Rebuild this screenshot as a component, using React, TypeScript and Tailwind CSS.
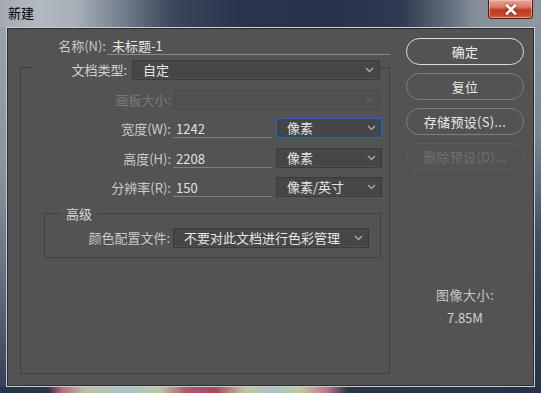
import React from "react";

const FONT = { fontFamily: '"Noto Sans CJK SC", "Noto Sans", sans-serif' };

function Chevron({ dim }: { dim?: boolean }) {
  return (
    <svg width="9" height="6" viewBox="0 0 9 6" className="shrink-0">
      <polyline
        points="1,1 4.5,4.5 8,1"
        fill="none"
        stroke={dim ? "#666666" : "#b8b8b8"}
        strokeWidth="1.1"
      />
    </svg>
  );
}

function Select({
  text,
  className,
  disabled,
  focused,
}: {
  text?: string;
  className: string;
  disabled?: boolean;
  focused?: boolean;
}) {
  const tone = focused
    ? "border-[#2f63ad] bg-[#454545] shadow-[inset_0_0_0_1px_#27466f]"
    : disabled
    ? "border-[#4a4a4a] bg-[#505050]"
    : "border-[#3a3a3a] bg-[#464646] shadow-[inset_0_-1px_0_#4e4e4e]";
  return (
    <div
      className={
        "h-[20px] flex items-center justify-between pl-[10px] pr-[5px] border shrink-0 " +
        tone +
        " " +
        className
      }
    >
      <span className="text-[13px] leading-[16px] text-[#e6e6e6] whitespace-nowrap">
        {text}
      </span>
      <Chevron dim={disabled} />
    </div>
  );
}

function ValueRow({
  label,
  value,
  unit,
  focused,
  className,
}: {
  label: string;
  value: string;
  unit: string;
  focused?: boolean;
  className: string;
}) {
  return (
    <div className={"flex items-end h-[20px] " + className}>
      <div className="w-[152px] shrink-0 text-right pr-[2px] mb-[1px] text-[13px] leading-[16px] text-[#cbcbcb] whitespace-nowrap">
        {label}
      </div>
      <div className="w-[99px] h-[20px] shrink-0 flex items-end border-b border-[#7e7e7e] pl-[3px]">
        <span className="text-[13px] leading-[16px] text-[#e2e2e2]">{value}</span>
      </div>
      <div className="ml-[4px]">
        <Select text={unit} focused={focused} className="w-[106px]" />
      </div>
    </div>
  );
}

function Btn({
  children,
  variant,
  className,
}: {
  children: React.ReactNode;
  variant: "default" | "normal" | "disabled";
  className?: string;
}) {
  const tone =
    variant === "default"
      ? "border-[1.5px] border-[#dedede] text-[#f0f0f0]"
      : variant === "disabled"
      ? "border border-[#5f5f5f] text-[#707070]"
      : "border border-[#7e7e7e] text-[#e8e8e8]";
  return (
    <div
      className={
        "w-[118px] h-[27px] rounded-full flex items-center justify-center text-[13px] leading-[16px] tracking-[0.3px] " +
        tone +
        " " +
        (className || "")
      }
    >
      {children}
    </div>
  );
}

export default function App() {
  return (
    <div
      className="w-[541px] h-[393px] overflow-hidden flex flex-col bg-[#26324a]"
      style={FONT}
    >
      {/* Title bar */}
      <div className="h-[27px] shrink-0 flex items-start justify-between bg-[linear-gradient(90deg,#a2aab2_0%,#b2b8bf_7%,#a8b0b8_14%,#76828f_22%,#3a475b_32%,#27344a_45%,#26334a_62%,#2d3a4f_74%,#5c6878_82%,#87909a_88%,#8e969f_100%)]">
        <div className="pl-[8px] pt-[4px] text-[13px] leading-[18px] text-black">
          新建
        </div>
        <div className="mr-[8px] w-[45px] h-[19px] rounded-b-[4px] border border-t-0 border-[#4a2219] bg-[linear-gradient(180deg,#eaa797_0%,#d87a64_40%,#c4391f_55%,#c9452b_85%,#d96a52_100%)] shadow-[inset_0_0_0_1px_rgba(255,220,210,0.45)] flex items-center justify-center">
          <svg width="14" height="11" viewBox="0 0 14 11" className="drop-shadow-[0_0_1px_#5a1a10]">
            <path d="M3 1.5 L11 9.5 M11 1.5 L3 9.5" stroke="#ffffff" strokeWidth="2.6" strokeLinecap="square" />
          </svg>
        </div>
      </div>

      {/* Middle */}
      <div className="flex h-[360px] shrink-0">
        <div className="w-[6px] shrink-0 bg-[linear-gradient(180deg,#9aa2ab_0%,#8a939d_40%,#5d6878_75%,#34405a_100%)]" />
        <div className="w-[529px] shrink-0 border border-[#c6ced8]">
          <div className="h-full border border-[#2c2c2c] bg-[#535353] flex">
            {/* Left column */}
            <div className="w-[382px] shrink-0 flex flex-col">
              {/* Name row */}
              <div className="mt-[9px] flex h-[17px]">
                <div className="w-[99px] shrink-0 text-right pr-[1px] text-[13px] leading-[16px] text-[#c8c8c8] whitespace-nowrap">
                  名称(N):
                </div>
                <div className="w-[285px] h-[17px] border-b border-[#8a8a8a] pl-[5px] text-[13px] leading-[16px] text-[#e6e6e6]">
                  未标题-1
                </div>
              </div>

              {/* Group box */}
              <div className="mt-[12px] ml-[12px] w-[370px] h-[307px] border border-[#404040] flex flex-col">
                <div className="mt-[-8px] h-[20px] flex">
                  <div className="w-[11px] shrink-0" />
                  <div className="w-[100px] shrink-0 bg-[#535353] text-right pr-[5px] text-[13px] leading-[20px] text-[#d2d2d2] whitespace-nowrap">
                    文档类型:
                  </div>
                  <Select text="自定" className="w-[248px]" />
                </div>

                <div className="mt-[10px] flex h-[20px]">
                  <div className="w-[154px] shrink-0 text-right pr-[4px] text-[13px] leading-[20px] text-[#7a7a7a]">
                    画板大小:
                  </div>
                  <Select disabled className="w-[205px]" />
                </div>

                <ValueRow className="mt-[8px]" label="宽度(W):" value="1242" unit="像素" focused />
                <ValueRow className="mt-[10px]" label="高度(H):" value="2208" unit="像素" />
                <ValueRow className="mt-[9px]" label="分辨率(R):" value="150" unit="像素/英寸" />

                {/* Advanced */}
                <div className="mt-[16px] ml-[23px] w-[337px] h-[45px] border border-[#404040] flex flex-col">
                  <div className="mt-[-8px] ml-[16px] h-[16px] w-fit px-[5px] bg-[#535353] text-[13px] leading-[16px] text-[#d8d8d8]">
                    高级
                  </div>
                  <div className="mt-[6px] flex h-[20px]">
                    <div className="w-[128px] shrink-0 text-right pr-[3px] text-[13px] leading-[20px] text-[#c8c8c8] whitespace-nowrap">
                      颜色配置文件:
                    </div>
                    <Select text="不要对此文档进行色彩管理" className="w-[196px]" />
                  </div>
                </div>
              </div>
            </div>

            {/* Right column */}
            <div className="flex-1 flex flex-col pl-[16px] pt-[9px]">
              <div className="flex flex-col gap-[8px]">
                <Btn variant="default">确定</Btn>
                <Btn variant="normal">复位</Btn>
                <Btn variant="normal">存储预设(S)...</Btn>
                <Btn variant="disabled">删除预设(D)...</Btn>
              </div>
              <div className="w-[118px] mt-[117px] text-center text-[13px] leading-[16px] text-[#c6c6c6] tracking-[0.5px]">
                图像大小:
              </div>
              <div className="w-[118px] mt-[7px] text-center text-[13px] leading-[16px] text-[#cfcfcf]">
                7.85M
              </div>
            </div>
          </div>
        </div>
        <div className="flex-1 bg-[linear-gradient(180deg,#8d959e_0%,#7b8591_30%,#3e4a5e_60%,#26324a_100%)]" />
      </div>

      {/* Bottom desktop strip */}
      <div className="flex-1 bg-[linear-gradient(90deg,#26324a_0px,#2a3548_48px,#b46a80_62px,#b7c2a0_85px,#a9c4c6_125px,#bcc8a2_160px,#b25b72_185px,#a84560_215px,#bfc7a0_245px,#a8c2c4_275px,#c0c8a0_300px,#c07c8e_325px,#2a3548_348px,#26324a_541px)]" />
    </div>
  );
}
